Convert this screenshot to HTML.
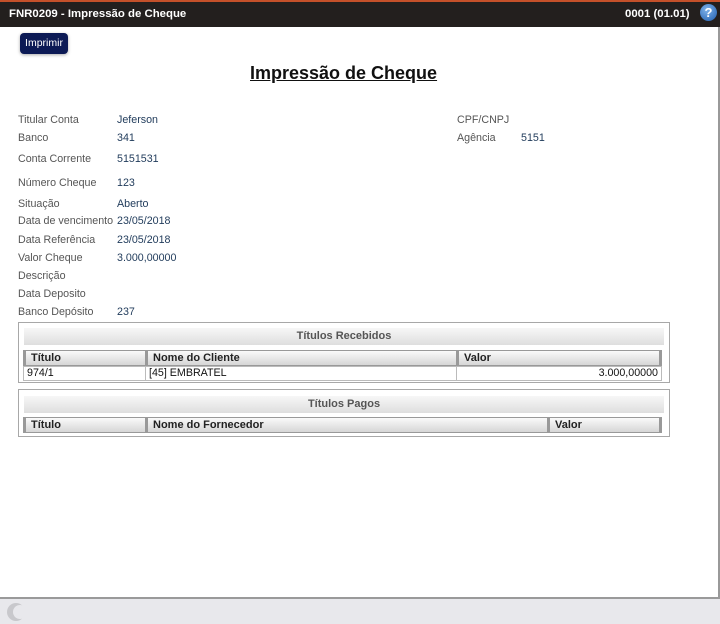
<!DOCTYPE html>
<html><head><meta charset="utf-8"><style>
*{margin:0;padding:0;box-sizing:border-box}
body{width:720px;height:624px;position:relative;background:#fff;font-family:"Liberation Sans",Arial,sans-serif;font-size:10.7px;color:#333;overflow:hidden}
.a{position:absolute;white-space:nowrap}
.top{position:absolute;left:0;top:0;width:720px;height:27px;background:#231f1e;border-top:2px solid #c4502a;color:#fff;font-weight:bold;font-size:11.4px}
.l{position:absolute;left:18px;color:#555;margin-top:1px}
.v{position:absolute;left:117px;color:#1f3a5a;margin-top:1px}
.box{position:absolute;left:18px;width:652px;border:1px solid #a8a8a8;background:#fff}
.bar{position:absolute;left:5px;width:640px;height:17px;background:linear-gradient(#f7f7f7,#dedede);text-align:center;color:#555;font-weight:bold;font-size:11px;line-height:17px}
.th{position:absolute;height:16px;background:linear-gradient(#fafafa,#d6d6d6);border:1px solid #999;border-left:3px solid #999;font-weight:bold;color:#222;padding-left:5px;line-height:14px;font-size:11px}
.td{position:absolute;height:15px;border:1px solid #bbb;padding:0 3px;line-height:13px;color:#111}
</style></head><body>
<div class="top"><span class="a" style="left:9px;top:6px">FNR0209 - Impressão de Cheque</span><span class="a" style="left:625px;top:6px">0001 (01.01)</span>
<span class="a" style="left:700px;top:2px;width:17px;height:17px;border-radius:50%;background:radial-gradient(circle at 40% 35%,#7fb2ea,#1f5dae);text-align:center;font-size:13px;line-height:17px">?</span></div>
<div class="a" style="left:20px;top:33px;width:48px;height:21px;background:#0c1a55;border-radius:4px;color:#fff;font-size:10.5px;line-height:21px;text-align:center;box-shadow:0 1px 3px #aaa">Imprimir</div>
<div class="a" style="left:250px;top:63px;font-size:18px;font-weight:bold;text-decoration:underline;color:#111">Impressão de Cheque</div>
<div class="l" style="top:113px">Titular Conta</div><div class="v" style="top:113px">Jeferson</div>
<div class="l" style="top:131px">Banco</div><div class="v" style="top:131px">341</div>
<div class="l" style="top:152px">Conta Corrente</div><div class="v" style="top:152px">5151531</div>
<div class="l" style="top:176px">Número Cheque</div><div class="v" style="top:176px">123</div>
<div class="l" style="top:197px">Situação</div><div class="v" style="top:197px">Aberto</div>
<div class="l" style="top:214px">Data de vencimento</div><div class="v" style="top:214px">23/05/2018</div>
<div class="l" style="top:233px">Data Referência</div><div class="v" style="top:233px">23/05/2018</div>
<div class="l" style="top:251px">Valor Cheque</div><div class="v" style="top:251px">3.000,00000</div>
<div class="l" style="top:269px">Descrição</div>
<div class="l" style="top:287px">Data Deposito</div>
<div class="l" style="top:305px">Banco Depósito</div><div class="v" style="top:305px">237</div>
<div class="a" style="left:457px;top:114px;color:#555">CPF/CNPJ</div>
<div class="a" style="left:457px;top:132px;color:#555">Agência</div><div class="a" style="left:521px;top:132px;color:#1f3a5a">5151</div>
<div class="box" style="top:322px;height:61px">
<div class="bar" style="top:5px">Títulos Recebidos</div>
<div class="th" style="left:4px;top:27px;width:123px">Título</div>
<div class="th" style="left:126px;top:27px;width:312px">Nome do Cliente</div>
<div class="th" style="left:437px;top:27px;width:206px;border-right:3px solid #999">Valor</div>
<div class="td" style="left:4px;top:43px;width:123px">974/1</div>
<div class="td" style="left:126px;top:43px;width:312px">[45] EMBRATEL</div>
<div class="td" style="left:437px;top:43px;width:206px;text-align:right">3.000,00000</div>
</div>
<div class="box" style="top:389px;height:48px">
<div class="bar" style="top:6px">Títulos Pagos</div>
<div class="th" style="left:4px;top:27px;width:123px">Título</div>
<div class="th" style="left:126px;top:27px;width:403px">Nome do Fornecedor</div>
<div class="th" style="left:528px;top:27px;width:115px;border-right:3px solid #999">Valor</div>
</div>
<div class="a" style="left:718px;top:27px;width:2px;height:571px;background:#999"></div>
<div class="a" style="left:0;top:597px;width:720px;height:27px;background:#e8e8ec;border-top:2px solid #9a9a9a"></div>
<div class="a" style="left:7px;top:603px;width:18px;height:18px;border-radius:50%;background:#c8c8cc"></div>
<div class="a" style="left:13px;top:605px;width:14px;height:14px;border-radius:50%;background:#e8e8ec"></div>
</body></html>
